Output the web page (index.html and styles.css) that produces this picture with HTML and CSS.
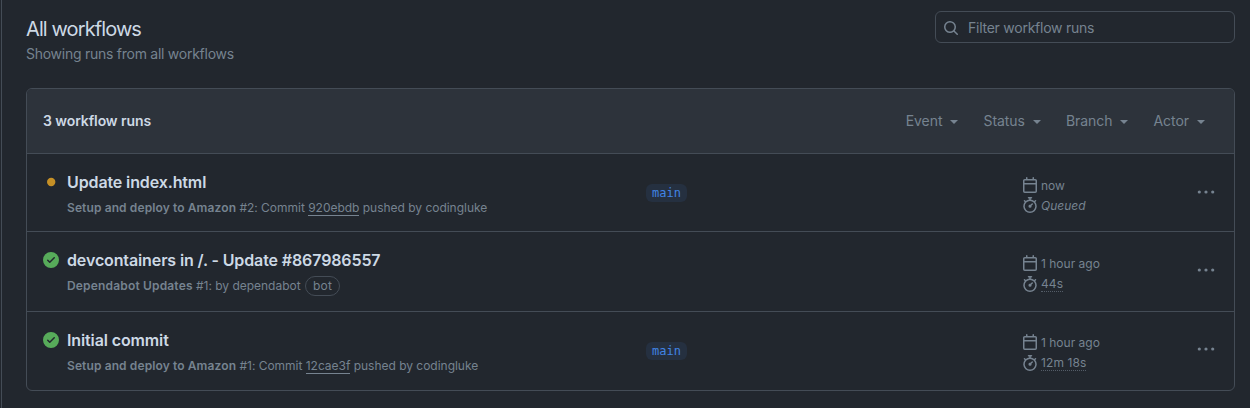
FILE: index.html
```html
<!DOCTYPE html>
<html lang="en">
<head>
<meta charset="utf-8">
<title>All workflows</title>
<link rel="stylesheet" href="styles.css">
</head>
<body>
<svg class="sprite" aria-hidden="true">
  <symbol id="calendar" viewBox="0 0 16 16"><path d="M4.75 0a.75.75 0 0 1 .75.75V2h5V.75a.75.75 0 0 1 1.5 0V2h1.25c.966 0 1.75.784 1.75 1.75v10.5A1.75 1.75 0 0 1 13.25 16H2.75A1.75 1.75 0 0 1 1 14.25V3.75C1 2.784 1.784 2 2.75 2H4V.75A.75.75 0 0 1 4.75 0ZM2.5 7.5v6.75c0 .138.112.25.25.25h10.5a.25.25 0 0 0 .25-.25V7.5Zm10.75-4H2.75a.25.25 0 0 0-.25.25V6h11V3.75a.25.25 0 0 0-.25-.25Z"/></symbol>
  <symbol id="stopwatch" viewBox="0 0 16 16"><path d="M5.75.75A.75.75 0 0 1 6.5 0h3a.75.75 0 0 1 0 1.5h-.75v1l-.001.041a6.724 6.724 0 0 1 3.464 1.435l.007-.006.75-.75a.749.749 0 0 1 1.275.326.749.749 0 0 1-.215.734l-.75.75-.006.007a6.75 6.75 0 1 1-10.548 0L2.72 5.03l-.75-.75a.751.751 0 0 1 .018-1.042.751.751 0 0 1 1.042-.018l.75.75.007.006A6.72 6.72 0 0 1 7.25 2.541V1.5H6.5a.75.75 0 0 1-.75-.75ZM8 14.5a5.25 5.25 0 1 0-.001-10.501A5.25 5.25 0 0 0 8 14.5Zm.389-6.7 1.33-1.33a.75.75 0 1 1 1.061 1.06L9.45 8.861A1.503 1.503 0 0 1 8 10.75a1.499 1.499 0 1 1 .389-2.95Z"/></symbol>
  <symbol id="success" viewBox="0 0 16 16"><path d="M8 16A8 8 0 1 1 8 0a8 8 0 0 1 0 16Zm3.78-9.72a.751.751 0 0 0-.018-1.042.751.751 0 0 0-1.042-.018L6.75 9.19 5.28 7.72a.751.751 0 0 0-1.042.018.751.751 0 0 0-.018 1.042l2 2a.75.75 0 0 0 1.06 0Z"/></symbol>
  <symbol id="queued" viewBox="0 0 16 16"><circle cx="8.2" cy="8" r="4.2"/></symbol>
  <symbol id="kebab" viewBox="0 0 18 4"><circle cx="2.3" cy="2" r="1.6"/><circle cx="9" cy="2" r="1.6"/><circle cx="15.7" cy="2" r="1.6"/></symbol>
  <symbol id="search" viewBox="0 0 16 16"><path d="M10.68 11.74a6 6 0 0 1-7.922-8.982 6 6 0 0 1 8.982 7.922l3.04 3.04a.749.749 0 0 1-.326 1.275.749.749 0 0 1-.734-.215ZM11.5 7a4.499 4.499 0 1 0-8.997 0A4.499 4.499 0 0 0 11.5 7Z"/></symbol>
</svg>
<main class="page">
  <header class="top">
    <div>
      <h1 class="heading">All workflows</h1>
      <p class="subheading">Showing runs from all workflows</p>
    </div>
    <label class="search">
      <svg class="icon"><use href="#search"/></svg>
      <span class="placeholder">Filter workflow runs</span>
    </label>
  </header>

  <section class="box">
    <div class="box-header">
      <strong class="count">3 workflow runs</strong>
      <nav class="filters">
        <span class="filter">Event</span>
        <span class="filter">Status</span>
        <span class="filter">Branch</span>
        <span class="filter">Actor</span>
      </nav>
    </div>

    <article class="row first">
      <svg class="icon state pending"><use href="#queued"/></svg>
      <div class="info">
        <h2 class="title">Update index.html</h2>
        <p class="desc"><b class="name">Setup and deploy to Amazon</b> #2: Commit <a class="sha">920ebdb</a> pushed by codingluke</p>
      </div>
      <div class="branch"><span class="label">main</span></div>
      <div class="meta">
        <div class="line"><svg class="icon"><use href="#calendar"/></svg><span>now</span></div>
        <div class="line"><svg class="icon"><use href="#stopwatch"/></svg><i>Queued</i></div>
      </div>
      <svg class="kebab"><use href="#kebab"/></svg>
    </article>

    <article class="row second">
      <svg class="icon state ok"><use href="#success"/></svg>
      <div class="info">
        <h2 class="title">devcontainers in /. - Update #867986557</h2>
        <p class="desc"><b class="name">Dependabot Updates</b> #1: by dependabot <span class="bot">bot</span></p>
      </div>
      <div class="branch"></div>
      <div class="meta">
        <div class="line"><svg class="icon"><use href="#calendar"/></svg><span>1 hour ago</span></div>
        <div class="line"><svg class="icon"><use href="#stopwatch"/></svg><span class="duration">44s</span></div>
      </div>
      <svg class="kebab"><use href="#kebab"/></svg>
    </article>

    <article class="row third">
      <svg class="icon state ok"><use href="#success"/></svg>
      <div class="info">
        <h2 class="title">Initial commit</h2>
        <p class="desc"><b class="name">Setup and deploy to Amazon</b> #1: Commit <a class="sha">12cae3f</a> pushed by codingluke</p>
      </div>
      <div class="branch"><span class="label">main</span></div>
      <div class="meta">
        <div class="line"><svg class="icon"><use href="#calendar"/></svg><span>1 hour ago</span></div>
        <div class="line"><svg class="icon"><use href="#stopwatch"/></svg><span class="duration">12m 18s</span></div>
      </div>
      <svg class="kebab"><use href="#kebab"/></svg>
    </article>
  </section>
</main>
</body>
</html>
```

FILE: styles.css
```css
* { box-sizing: border-box; }
body {
  margin: 0;
  background: #22272e;
  color: #cdd9e5;
  font-family: Inter, "Liberation Sans", sans-serif;
  font-size: 14px;
}
h1, h2, p { margin: 0; }
.sprite { display: none; }
.icon { width: 16px; height: 16px; fill: currentColor; flex: none; }
.page {
  height: 408px;
  margin-left: 1px;
  padding: 11px 15px 0 24px;
  border-left: 1px solid #444c56;
}
.top { display: flex; justify-content: space-between; height: 77px; }
.heading { padding-top: 3px; font-size: 20px; font-weight: 400; line-height: 30px; letter-spacing: -0.9px; }
.subheading { color: #768390; line-height: 20px; letter-spacing: -0.26px; }
.search {
  display: flex;
  align-items: center;
  width: 300px;
  height: 32px;
  padding: 0 7px;
  gap: 9px;
  border: 1px solid #444c56;
  border-radius: 6px;
  color: #768390;
}
.search .icon { margin-top: 1px; }
.placeholder { letter-spacing: -0.25px; }

.box { height: 303px; border: 1px solid #444c56; border-radius: 6px; overflow: hidden; }
.box-header {
  display: flex;
  align-items: center;
  justify-content: space-between;
  height: 65px;
  padding: 0 29px 1px 16px;
  background: #2d333b;
  border-bottom: 1px solid #444c56;
}
.count { font-weight: 600; letter-spacing: -0.09px; }
.filters { display: flex; gap: 25px; color: #768390; }
.filter { display: flex; align-items: center; gap: 8px; letter-spacing: -0.05px; }
.filter::after {
  content: "";
  margin-top: 2px;
  border: 4px solid transparent;
  border-top-color: currentColor;
  border-bottom: 0;
}

.row {
  display: grid;
  grid-template-columns: 24px 579px 376px 175px 18px;
  height: 79px;
  padding: 0 0 0 16px;
  color: #768390;
  border-bottom: 1px solid #444c56;
}
.first { height: 78px; }
.second { height: 80px; }
.third { border-bottom: 0; }
.state { margin-top: 20px; }
.pending { color: #c69026; }
.ok { color: #57ab5a; }
.info { padding-top: 16px; }
.title { color: #cdd9e5; font-size: 16px; font-weight: 600; line-height: 24px; letter-spacing: -0.12px; }
.desc { margin-top: 4px; font-size: 12px; line-height: 19px; white-space: nowrap; letter-spacing: -0.02px; }
.name { font-weight: 600; letter-spacing: 0.11px; }
.second .name { letter-spacing: 0.17px; }
.sha { border-bottom: 1px solid currentColor; }
.bot {
  display: inline-block;
  height: 20px;
  margin-left: 1px;
  padding: 0 7px;
  line-height: 18px;
  letter-spacing: 0.2px;
  border: 1px solid #444c56;
  border-radius: 10px;
}
.branch { padding-top: 30px; }
.label {
  display: block;
  width: 41px;
  height: 18px;
  border-radius: 6px;
  background: #253040;
  color: #4184e4;
  font: 12px/18px "DejaVu Sans Mono", monospace;
  text-align: center;
}
.meta { padding-top: 21px; font-size: 12px; }
.third .meta { padding-top: 20px; }
.line { display: flex; align-items: center; gap: 3px; height: 20px; }
.second .line + .line, .third .line + .line { margin-top: 1px; }
.duration { border-bottom: 1px dotted #545d68; letter-spacing: 0.1px; }
.kebab { width: 18px; height: 4px; margin-top: 36px; fill: currentColor; }
.third .kebab { margin-top: 35px; }
```
